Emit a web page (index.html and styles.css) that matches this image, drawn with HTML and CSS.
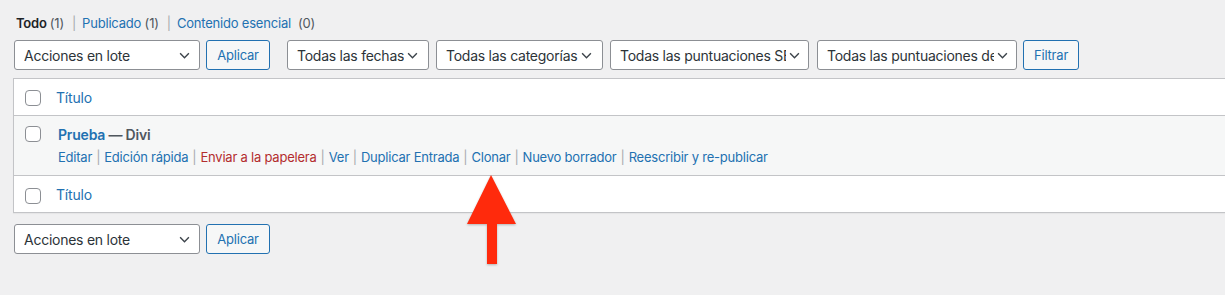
FILE: index.html
```html
<!DOCTYPE html>
<html lang="es">
<head>
<meta charset="utf-8">
<title>Entradas</title>
<link rel="stylesheet" href="styles.css">
</head>
<body>
<div class="wrap">
  <ul class="subsubsub">
    <li class="current">Todo <span class="count">(1)</span></li>
    <li class="sep">|</li>
    <li><a href="#">Publicado <span class="count">(1)</span></a></li>
    <li class="sep">|</li>
    <li><a href="#">Contenido esencial</a>  <span class="count">(0)</span></li>
  </ul>

  <div class="tablenav top">
    <div class="select w-bulk"><span class="label">Acciones en lote</span><svg class="chev" viewBox="0 0 12 8"><polyline points="1,1.5 6,6.5 11,1.5"/></svg></div>
    <button class="button">Aplicar</button>
    <div class="select w-dates ml"><span class="label">Todas las fechas</span><svg class="chev" viewBox="0 0 12 8"><polyline points="1,1.5 6,6.5 11,1.5"/></svg></div>
    <div class="select w-cats"><span class="label">Todas las categorías</span><svg class="chev" viewBox="0 0 12 8"><polyline points="1,1.5 6,6.5 11,1.5"/></svg></div>
    <div class="select w-seo"><span class="label">Todas las puntuaciones SEO</span><svg class="chev" viewBox="0 0 12 8"><polyline points="1,1.5 6,6.5 11,1.5"/></svg></div>
    <div class="select w-read"><span class="label">Todas las puntuaciones de legibilidad</span><svg class="chev" viewBox="0 0 12 8"><polyline points="1,1.5 6,6.5 11,1.5"/></svg></div>
    <button class="button btn-filter">Filtrar</button>
  </div>

  <div class="list-table">
    <div class="row head">
      <span class="cb"></span>
      <a class="col-title" href="#">Título</a>
    </div>
    <div class="row post">
      <span class="cb"></span>
      <div class="post-main">
        <div class="post-title"><a href="#">Prueba</a> — Divi</div>
        <div class="row-actions">
          <a href="#">Editar</a><span class="bar">|</span><a href="#">Edición rápida</a><span class="bar">|</span><a class="trash" href="#">Enviar a la papelera</a><span class="bar">|</span><a href="#">Ver</a><span class="bar">|</span><a href="#">Duplicar Entrada</a><span class="bar">|</span><a href="#">Clonar</a><span class="bar">|</span><a href="#">Nuevo borrador</a><span class="bar">|</span><a href="#">Reescribir y re-publicar</a>
        </div>
      </div>
    </div>
    <div class="row foot">
      <span class="cb"></span>
      <a class="col-title" href="#">Título</a>
    </div>
  </div>

  <div class="tablenav bottom">
    <div class="select w-bulk"><span class="label">Acciones en lote</span><svg class="chev" viewBox="0 0 12 8"><polyline points="1,1.5 6,6.5 11,1.5"/></svg></div>
    <button class="button">Aplicar</button>
  </div>
</div>

<svg class="arrow" width="60" height="100" viewBox="0 0 60 100">
  <polygon points="3,49 27,0 52,49 33,49 33,89 23,89 23,49"/>
</svg>
</body>
</html>
```

FILE: styles.css
```css
html, body {
  margin: 0;
  padding: 0;
}
body {
  background: #f0f0f1;
  font-family: "Inter", "Noto Sans", sans-serif;
  font-size: 13px;
  letter-spacing: -0.2px;
  color: #3c434a;
  width: 1225px;
  height: 295px;
  overflow: hidden;
  position: relative;
}
a {
  color: #2271b1;
  text-decoration: none;
}
.wrap {
  padding-left: 13px;
  width: 1240px;
}
.subsubsub {
  list-style: none;
  margin: 0;
  padding: 10px 0 0 3px;
  display: flex;
  line-height: 26px;
  height: 26px;
  color: #646970;
}
.subsubsub li {
  white-space: pre;
}
.subsubsub .current {
  color: #1d2327;
  font-weight: 600;
}
.subsubsub .count {
  color: #50575e;
  font-weight: 400;
}
.subsubsub .sep {
  color: #a7aaad;
  margin: 0 6px 0 8px;
}
.tablenav {
  display: flex;
  align-items: center;
  padding-left: 1px;
}
.tablenav.top {
  margin-top: 4px;
  height: 30px;
}
.tablenav.bottom {
  margin-top: 11px;
  height: 30px;
}
.select {
  box-sizing: border-box;
  height: 30px;
  border: 1px solid #8c8f94;
  border-radius: 3px;
  background: #fff;
  display: flex;
  align-items: center;
  padding: 0 9px 0 9px;
  font-size: 14px;
  letter-spacing: -0.25px;
  color: #2c3338;
  margin-right: 7px;
  flex: none;
}
.select .label {
  flex: 1;
  white-space: nowrap;
  overflow: hidden;
  text-overflow: clip;
}
.select .chev {
  width: 11px;
  height: 7px;
  flex: none;
  margin-left: 3px;
}
.select .chev polyline {
  fill: none;
  stroke: #3c434a;
  stroke-width: 1.6;
}
.w-bulk { width: 186px; margin-right: 6px; }
.w-dates { width: 142px; padding-right: 10px; }
.w-cats { width: 167px; padding-right: 10px; }
.w-seo { width: 199px; margin-right: 8px; padding-right: 8px; }
.w-read { width: 200px; margin-right: 6px; padding-right: 8px; }
.ml { margin-left: 17px; }
.button {
  box-sizing: border-box;
  height: 30px;
  border: 1px solid #2271b1;
  border-radius: 3px;
  background: #f6f7f7;
  color: #2271b1;
  font-family: inherit;
  font-size: 13px;
  letter-spacing: -0.2px;
  padding: 0 10px;
  width: 64px;
  flex: none;
}
.btn-filter { width: 56px; }

.list-table {
  margin-top: 8px;
  border: 1px solid #c3c4c7;
  background: #fff;
  box-shadow: 0 1px 1px rgba(0,0,0,.04);
}
.row {
  display: flex;
  align-items: center;
  box-sizing: border-box;
  padding-left: 11px;
}
.row.head {
  height: 37px;
  padding-top: 2px;
  border-bottom: 1px solid #c3c4c7;
}
.row.post {
  height: 60px;
  background: #f6f7f7;
  align-items: flex-start;
  border-bottom: 1px solid #c3c4c7;
}
.row.foot {
  height: 36px;
  padding-top: 3px;
}
.cb {
  box-sizing: border-box;
  width: 16px;
  height: 16px;
  border: 1px solid #8c8f94;
  border-radius: 4px;
  background: #fff;
  flex: none;
  margin-right: 15px;
}
.row.post .cb {
  margin-top: 10px;
}
.col-title {
  font-size: 14px;
}
.row.head .col-title, .row.foot .col-title {
  position: relative;
  top: -1px;
}
.post-main {
  padding-left: 2px;
  padding-top: 9px;
}
.post-title {
  font-size: 14px;
  font-weight: 600;
  color: #50575e;
  line-height: 20px;
}
.post-title a {
  font-weight: 600;
}
.row-actions {
  margin-top: 2px;
  line-height: 20px;
  white-space: nowrap;
  letter-spacing: -0.22px;
}
.row-actions .bar {
  color: #a7aaad;
  margin: 0 4px;
}
.row-actions .trash {
  color: #b32d2e;
}
.arrow {
  position: absolute;
  left: 464px;
  top: 175px;
  filter: drop-shadow(0 1px 1px rgba(0,0,0,.25));
}
.arrow polygon {
  fill: #ff2a0c;
}
```
